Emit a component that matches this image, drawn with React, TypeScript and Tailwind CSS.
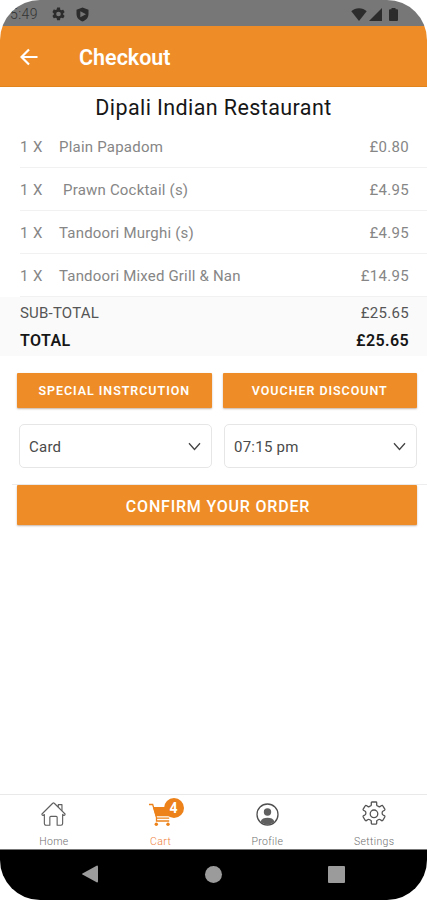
import type { ReactNode } from "react";

const items = [
  { name: "Plain Papadom", price: "£0.80", className: "tracking-[0.22px]" },
  { name: "Prawn Cocktail (s)", price: "£4.95", className: "pl-1 tracking-[0.2px]" },
  { name: "Tandoori Murghi (s)", price: "£4.95", className: "tracking-[0.2px]" },
  { name: "Tandoori Mixed Grill & Nan", price: "£14.95", className: "tracking-[0.18px]" },
];

function StatusBar() {
  return (
    <div className="flex h-[26px] shrink-0 items-center bg-[#777777] pt-[2px] pl-[10px] text-[#2c2c2c]">
      <span className="w-[42px] text-[14px] font-light tracking-[0.4px] text-[#333333]">5:49</span>
      <svg width="13" height="14" viewBox="2 2 20 20" fill="currentColor">
        <path d="M19.14 12.94c.04-.3.06-.61.06-.94 0-.32-.02-.64-.07-.94l2.03-1.58a.49.49 0 0 0 .12-.61l-1.92-3.32a.49.49 0 0 0-.59-.22l-2.39.96a7 7 0 0 0-1.62-.94l-.36-2.54A.48.48 0 0 0 13.92 2h-3.84a.48.48 0 0 0-.47.41l-.36 2.54c-.59.24-1.13.57-1.62.94l-2.39-.96a.48.48 0 0 0-.59.22L2.74 8.87a.48.48 0 0 0 .12.61l2.03 1.58c-.05.3-.09.63-.09.94s.02.64.07.94l-2.03 1.58a.49.49 0 0 0-.12.61l1.92 3.32c.12.22.37.29.59.22l2.39-.96c.5.38 1.03.7 1.62.94l.36 2.54c.05.24.24.41.48.41h3.84c.24 0 .44-.17.47-.41l.36-2.54a7 7 0 0 0 1.62-.94l2.39.96c.22.08.47 0 .59-.22l1.92-3.32a.48.48 0 0 0-.12-.61zM12 15.6A3.6 3.6 0 1 1 12 8.4a3.6 3.6 0 0 1 0 7.2z" />
      </svg>
      <svg className="ml-[11px]" width="13" height="15" viewBox="0 0 13 15">
        <path d="M6.5 .5 12.5 2.8V7c0 3.6-2.5 6.4-6 7.5C3 13.4.5 10.6.5 7V2.8z" fill="currentColor" />
        <path d="M4.3 4.2 10 7.2 4.3 10.3z" fill="#777777" />
      </svg>
      <div className="ml-auto flex items-center pr-[29px]">
        <svg width="16" height="13" viewBox="0 0 16 13" fill="currentColor">
          <path d="M8 13 .3 3.2C2.4 1.3 5 .3 8 .3s5.6 1 7.7 2.9z" />
        </svg>
        <svg className="ml-[2px]" width="13" height="13" viewBox="0 0 13 13" fill="currentColor">
          <path d="M13 0v13H0z" />
        </svg>
        <svg className="ml-[7px]" width="9" height="13" viewBox="0 0 9 13" fill="currentColor">
          <path d="M2.5 0h4v1.3H8a1 1 0 0 1 1 1V12a1 1 0 0 1-1 1H1a1 1 0 0 1-1-1V2.3a1 1 0 0 1 1-1h1.5z" />
        </svg>
      </div>
    </div>
  );
}

function Select({ value }: { value: string }) {
  return (
    <button className="flex h-[44px] flex-1 items-center justify-between rounded-[5px] border border-[#e6e6e6] bg-white pr-[10px] pl-[9px] text-[15px] text-[#4a4a4a]">
      <span className="pt-[2px] tracking-[0.25px]">{value}</span>
      <svg width="13" height="9" viewBox="0 0 13 9" fill="none" stroke="#444444" strokeWidth="1.3">
        <path d="M1 1.2 6.5 7.5 12 1.2" />
      </svg>
    </button>
  );
}

function Tab({ label, active, children }: { label: string; active?: boolean; children: ReactNode }) {
  return (
    <div
      className={`flex flex-1 flex-col items-center pt-[4px] pl-px ${active ? "text-[#ef7f3c]" : "text-[#707070]"}`}
    >
      <div className="relative flex h-[30px] items-center justify-center">{children}</div>
      <span className="mt-[6px] text-[10.5px] leading-[14px] font-light tracking-[0.35px]">{label}</span>
    </div>
  );
}

export default function App() {
  return (
    <div className="h-[900px] w-[427px] bg-white font-['Roboto',sans-serif]">
      <div className="flex h-full flex-col overflow-hidden rounded-[40px] bg-white">
        <StatusBar />

        <header className="flex h-[61px] shrink-0 items-center border-b border-[#e2841d] bg-[#ee8d27] pt-[2px] pl-[20px] text-white">
          <svg width="18" height="18" viewBox="0 0 18 18" fill="none" stroke="currentColor" strokeWidth="2.2">
            <path d="M17.5 9H2M9 1.5 1.5 9 9 16.5" />
          </svg>
          <h1 className="ml-[41px] pt-[2px] text-[21.5px] font-semibold">Checkout</h1>
        </header>

        <h2 className="mt-[6px] text-center text-[21.5px] leading-[30px] tracking-[0.4px] text-[#161616]">
          Dipali Indian Restaurant
        </h2>

        <ul className="mt-[2px] pl-[20px]">
          {items.map((item) => (
            <li
              key={item.name}
              className="flex h-[43px] items-center border-b border-[#f1f1f1] pt-[2px] pr-[18px] text-[15px] text-[#868686]"
            >
              <span className="w-[39px] tracking-[0.4px]">1 X</span>
              <span className={item.className}>{item.name}</span>
              <span className="ml-auto tracking-[0.3px]">{item.price}</span>
            </li>
          ))}
        </ul>

        <div className="h-[59px] shrink-0 bg-[#fafafa] pt-[3px] pr-[18px] pl-[20px] text-[15px] leading-[27px]">
          <div className="flex justify-between text-[#555555]">
            <span className="tracking-[0.2px]">SUB-TOTAL</span>
            <span className="tracking-[0.3px]">£25.65</span>
          </div>
          <div className="flex justify-between text-[16px] font-semibold tracking-[0.4px] text-[#161616]">
            <span>TOTAL</span>
            <span>£25.65</span>
          </div>
        </div>

        <div className="mt-[17px] flex gap-[11px] pr-[10px] pl-[17px] text-[12.5px] font-semibold tracking-[0.95px] text-white">
          <button className="h-[35px] flex-1 rounded-[1px] bg-[#ee8d27] pt-[2px] whitespace-nowrap shadow-[0_1px_2px_rgba(90,40,0,0.35)]">
            SPECIAL INSTRCUTION
          </button>
          <button className="h-[35px] flex-1 rounded-[1px] bg-[#ee8d27] pt-[2px] whitespace-nowrap shadow-[0_1px_2px_rgba(90,40,0,0.35)]">
            VOUCHER DISCOUNT
          </button>
        </div>

        <div className="mt-[16px] flex gap-[12px] pr-[10px] pl-[19px]">
          <Select value="Card" />
          <Select value="07:15 pm" />
        </div>

        <div className="mt-[16px] ml-[12px] border-t border-[#ededed] pr-[10px] pl-[5px]">
          <button className="h-[40px] w-full rounded-[1px] bg-[#ee8d27] pt-[3px] pl-[2px] text-[16px] font-medium tracking-[0.8px] text-white shadow-[0_1px_2px_rgba(90,40,0,0.35)]">
            CONFIRM YOUR ORDER
          </button>
        </div>

        <nav className="mt-auto flex h-[55px] shrink-0 border-t border-[#e9e9e9] bg-white">
          <Tab label="Home">
            <svg width="25" height="26" viewBox="0 0 26 26" fill="none" stroke="#606060" strokeWidth="1.2" strokeLinejoin="round">
              <path d="M1 13 12.2 1.8a1.1 1.1 0 0 1 1.6 0l4.200 4.200V3.300h3.800v6.500L25 13q.3 1.300-1.200 1.500l-1.300-1v9.500a1.700 1.700 0 0 1-1.700 1.700h-4v-8.200a1 1 0 0 0-1-1h-5.600a1 1 0 0 0-1 1v8.200H5.200A1.700 1.700 0 0 1 3.500 23v-9.500l-1.300 1Q.7 14.300 1 13z" />
              <path d="M18 6l3.800 3.800" />
            </svg>
          </Tab>
          <Tab label="Cart" active>
            <svg width="23" height="23" viewBox="0 0 23 23" fill="none">
              <path d="M4 4H23l-3 9.200H6.700z" fill="#ec8219" />
              <path d="M0 1.500h3.700L7.500 14.500V18h12.700M7.500 15.200h12.700" stroke="#ec8219" strokeWidth="1.3" />
              <circle cx="7.3" cy="21.2" r="1.7" fill="#ec8219" />
              <circle cx="19" cy="21.2" r="1.7" fill="#ec8219" />
            </svg>
            <span className="absolute top-[-1px] left-[15px] flex h-[20px] w-[20px] items-center justify-center rounded-full bg-[#ec8219] pr-px text-[14px] font-bold text-white">
              4
            </span>
          </Tab>
          <Tab label="Profile">
            <svg width="23" height="23" viewBox="0 0 23 23">
              <circle cx="11.5" cy="11.5" r="10.5" fill="none" stroke="#505050" strokeWidth="1.3" />
              <circle cx="11.5" cy="9" r="3.7" fill="#606060" />
              <path d="M4.5 18.5c1.3-2.7 3.5-3.7 7-3.7s5.7 1 7 3.7c-1.8 2-4.3 3-7 3s-5.200-1-7-3z" fill="#606060" />
            </svg>
          </Tab>
          <Tab label="Settings">
            <svg width="26" height="26" viewBox="0 0 26 26" fill="none" stroke="#555555" strokeWidth="1.3" strokeLinejoin="round">
              <path d="M11 1h4q.7 0 .7.8v2.1q0 .6.6.9l1.5.8q.6.3 1.1 0l1.8-1.1q.7-.4 1.1.3l2 3.3q.4.7-.2 1.1l-1.8 1.1q-.6.4-.6 1v1.5q0 .6.6 1l1.8 1.1q.6.4.2 1.1l-2 3.3q-.4.7-1.1.3l-1.8-1.1q-.5-.3-1.1 0l-1.5.8q-.6.3-.6.9v2.1q0 .8-.7.8h-4q-.7 0-.7-.8v-2.1q0-.6-.6-.9l-1.5-.8q-.6-.3-1.1 0l-1.8 1.1q-.7.4-1.1-.3l-2-3.3q-.4-.7.2-1.1l1.8-1.1q.6-.4.6-1v-1.5q0-.6-.6-1L2.4 9.200q-.6-.4-.2-1.1l2-3.3q.4-.7 1.1-.3l1.8 1.1q.5.3 1.1 0l1.5-.8q.6-.3.6-.9V1.8Q10.3 1 11 1z" />
              <circle cx="13" cy="12.8" r="3.8" />
            </svg>
          </Tab>
        </nav>

        <div className="flex h-[51px] shrink-0 items-center justify-between border-t border-[#777777] bg-black pr-[82px] pb-[2px] pl-[82px]">
          <svg width="16" height="18" viewBox="0 0 17 18" fill="#9b9b9b">
            <path d="M16 0a1 1 0 0 1 1 1v16a1 1 0 0 1-1 1L.5 9.5a.6.6 0 0 1 0-1z" />
          </svg>
          <span className="h-[17px] w-[17px] rounded-full bg-[#9b9b9b]" />
          <span className="h-[17px] w-[17px] rounded-[1px] bg-[#9b9b9b]" />
        </div>
      </div>
    </div>
  );
}
